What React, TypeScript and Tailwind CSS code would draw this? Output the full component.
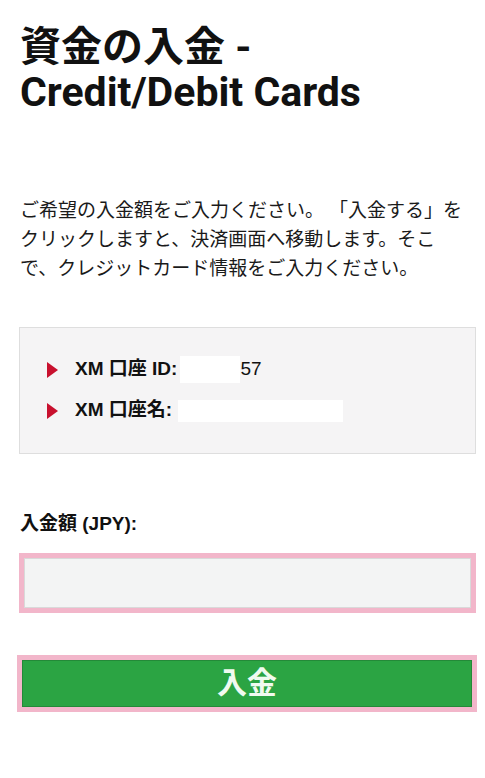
const JP = 'font-["Noto_Sans","Noto_Sans_CJK_JP",sans-serif]';
const LABEL = 'font-["Liberation_Sans","Noto_Sans_CJK_JP",sans-serif]';

function Caret() {
  return (
    <svg width="11" height="16" viewBox="0 0 11 16" className="shrink-0">
      <polygon points="0,0 11,8 0,16" fill="#c8102e" />
    </svg>
  );
}

function AccountRow({ label, children }: { label: string; children: React.ReactNode }) {
  return (
    <div className="flex h-[41px] items-center">
      <Caret />
      <span className={`ml-[17px] text-[19px] font-bold text-[#111] ${LABEL}`}>{label}</span>
      {children}
    </div>
  );
}

export default function App() {
  return (
    <div className={`min-h-screen bg-white pl-[19px] pr-[9px] text-[#111] ${JP}`}>
      <h1 className='pl-px pt-[25px] font-["Roboto","Noto_Sans_CJK_JP",sans-serif] text-[41px] font-bold leading-[45px]'>
        資金の入金 -<br />
        Credit/Debit Cards
      </h1>

      <p className="mt-[81px] pl-px text-[19px] leading-[29px] text-[#1a1a1a] whitespace-nowrap">
        ご希望の入金額をご入力ください。 「入金する」を<br />
        クリックしますと、決済画面へ移動します。そこ<br />
        で、クレジットカード情報をご入力ください。
      </p>

      <div className="mt-[44px] border border-[#dedede] bg-[#f5f4f5] pb-[22px] pt-[21px] pl-[27px]">
        <AccountRow label="XM 口座 ID:">
          <span className="ml-[3px] h-[27px] w-[60px] bg-white" />
          <span className={`text-[19px] text-[#111] ${LABEL}`}>57</span>
        </AccountRow>
        <AccountRow label="XM 口座名:">
          <span className="ml-[6px] h-[22px] w-[165px] bg-white" />
        </AccountRow>
      </div>

      <label className={`mt-[57px] block pl-px text-[19px] font-bold leading-[26px] ${LABEL}`}>入金額 (JPY):</label>

      <div className="mt-[16px] border-[5px] border-[#f2b6ca]">
        <input
          type="text"
          className="block h-[50px] w-full border border-[#d9d9d9] bg-[#f3f4f4] px-3 text-[17px] outline-none"
        />
      </div>

      <button
        type="button"
        className="-ml-[2px] -mr-[1px] mt-[42px] block h-[57px] w-[calc(100%+3px)] border-[5px] border-[#f2b6ca] bg-[#2ba443] text-[30px] font-bold leading-none text-[#f0faf0]"
      >
        <span className="block h-full w-full border border-[#238a38] pt-[6px]">入金</span>
      </button>
    </div>
  );
}
